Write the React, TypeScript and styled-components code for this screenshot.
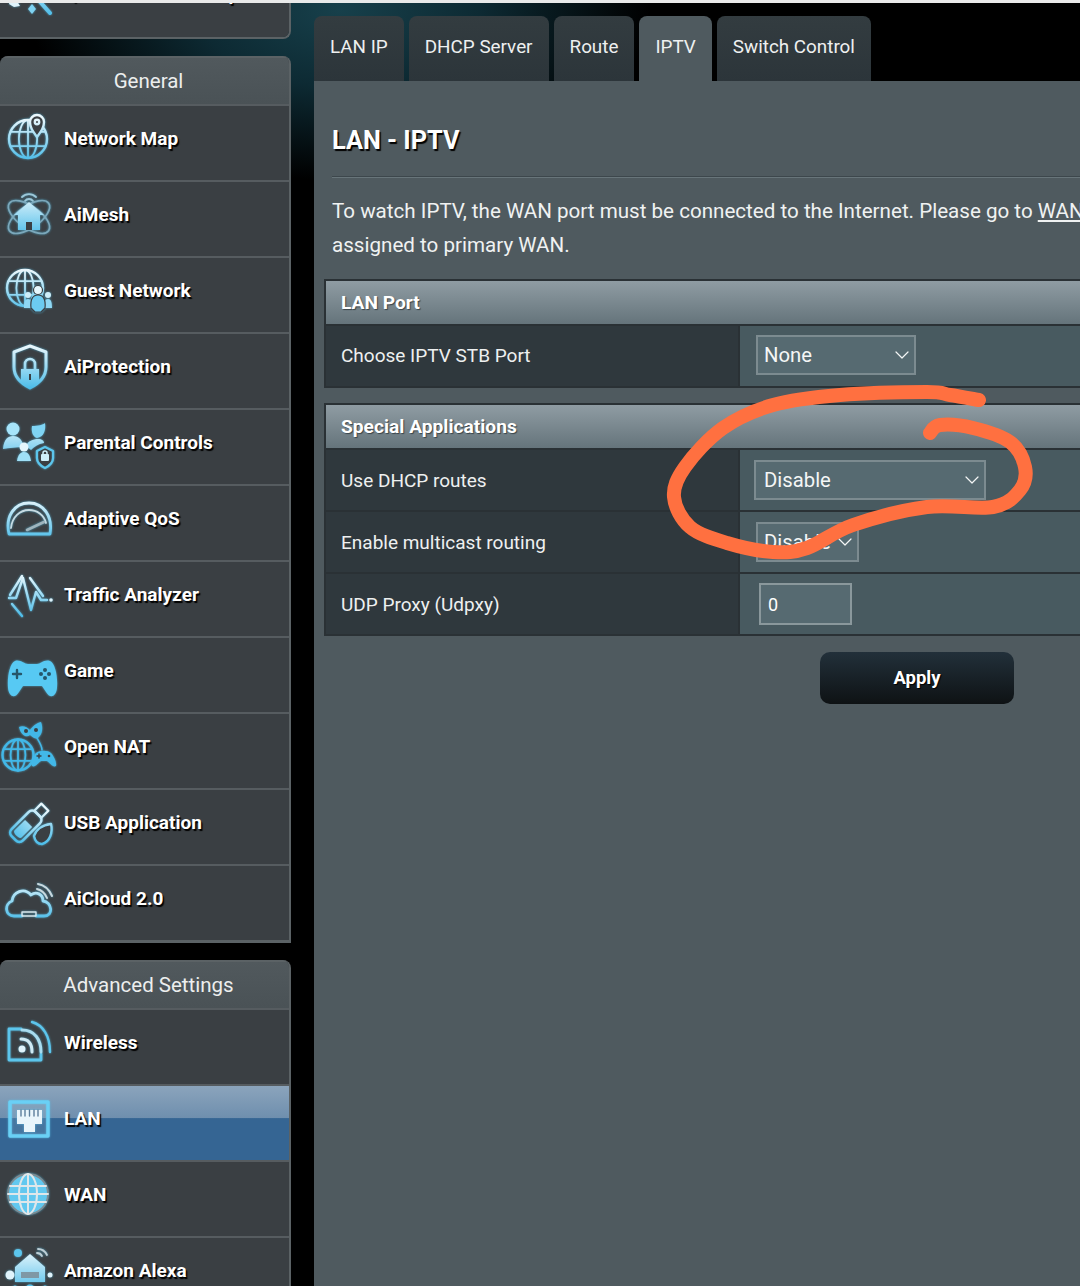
import React from "react";
import styled, { createGlobalStyle } from "styled-components";
import { ChevronDown } from "lucide-react";

const Global = createGlobalStyle`
  html, body { margin: 0; padding: 0; background: #000; }
  body { font-family: Roboto, "Liberation Sans", sans-serif; color: #fff; }
`;

const Page = styled.div`
  position: relative;
  width: 1080px;
  height: 1286px;
  overflow: hidden;
  display: flex;
  flex-direction: column;
  background: radial-gradient(ellipse 310px 170px at 340px 10px, #17404b 0%, #0d2a33 45%, #000 100%), #000;
`;
const TopStrip = styled.div`
  position: relative;
  z-index: 1;
  height: 3px;
  flex: none;
  background: #e9eaea;
`;
const Body = styled.div`
  flex: 1;
  min-height: 0;
  display: flex;
  gap: 23px;
`;
const Sidebar = styled.nav`
  width: 291px;
  flex: none;
  display: flex;
  flex-direction: column;
  gap: 17px;
`;
const MenuPanel = styled.section<{ $clipped?: boolean }>`
  display: flex;
  flex-direction: column;
  justify-content: ${(p) => (p.$clipped ? "flex-end" : "flex-start")};
  flex: none;
  box-sizing: border-box;
  overflow: hidden;
  height: ${(p) => (p.$clipped ? "36px" : "auto")};
  background: #3a3f43;
  border-right: 2px solid #5b6265;
  border-radius: ${(p) => (p.$clipped ? "0 0 8px 0" : "8px 8px 0 0")};
  border-bottom: ${(p) => (p.$clipped ? "2px" : "3px")} solid #5b6265;
`;
const MenuHeading = styled.h2`
  margin: 0;
  height: 48px;
  box-sizing: border-box;
  padding: 8px 0 0 8px;
  text-align: center;
  font-size: 20.5px;
  line-height: 30px;
  font-weight: 400;
  color: #eceeee;
  background: linear-gradient(#51595d, #4a5256);
  border-top: 2px solid #5b6265;
`;
const MenuRow = styled.div<{ $active?: boolean; $raised?: boolean }>`
  height: 76px;
  flex: none;
  box-sizing: border-box;
  display: flex;
  align-items: center;
  gap: 8px;
  padding-bottom: ${(p) => (p.$raised ? "14px" : "10px")};
  border-top: 2px solid #565c60;
  background: ${(p) =>
    p.$active
      ? "linear-gradient(#8ba4bc 0%, #6f8fae 43%, #356593 44%, #356593 100%)"
      : "#3a3f43"};
`;
const MenuLabel = styled.span`
  font-size: 19px;
  font-weight: 700;
  color: #fff;
  white-space: nowrap;
  text-shadow: 1.5px 1.5px 1px #000;
`;
const IconSvg = styled.svg`
  width: 56px;
  height: 56px;
  flex: none;
  overflow: visible;
  fill: none;
  stroke: url(#iconFade);
  stroke-width: 2.4;
  stroke-linecap: round;
  stroke-linejoin: round;
  filter: drop-shadow(0 0 1.2px rgba(90, 200, 240, 0.7));
`;
const HiddenDefs = styled.svg`
  position: absolute;
  width: 0;
  height: 0;
`;

const Main = styled.main`
  flex: 1;
  min-width: 0;
  padding-top: 13px;
  display: flex;
  flex-direction: column;
`;
const TabBar = styled.div`
  display: flex;
  gap: 5px;
  height: 65px;
  flex: none;
`;
const Tab = styled.div<{ $active?: boolean }>`
  padding: 0 16px 4px;
  display: flex;
  align-items: center;
  font-size: 18.85px;
  color: #eef0f0;
  border-radius: 8px 8px 0 0;
  background: ${(p) => (p.$active ? "#4f5a5f" : "linear-gradient(#333c40, #2c353a)")};
`;
const ContentPanel = styled.div`
  flex: 1;
  background: #4f5a5f;
  padding: 45px 0 0 10px;
`;
const Title = styled.h1`
  margin: 0 0 20px 8px;
  font-size: 25.3px;
  line-height: 30px;
  font-weight: 700;
  text-shadow: 1.5px 1.5px 1px #000;
`;
const Divider = styled.div`
  margin-left: 8px;
  height: 2px;
  background: linear-gradient(#3d474c 50%, #68757a 50%);
`;
const Intro = styled.p`
  margin: 16px 0 17px 8px;
  font-size: 20.6px;
  line-height: 34px;
  white-space: nowrap;
  color: #f0f2f2;
`;
const Section = styled.section`
  width: 1184px;
  margin-bottom: 15px;
  border: 2px solid #2a3135;
  border-right: none;
  box-sizing: border-box;
`;
const SectionTitle = styled.h3`
  margin: 0;
  height: 45px;
  box-sizing: border-box;
  padding-left: 15px;
  border-bottom: 2px solid #2a3135;
  font-size: 19.2px;
  line-height: 43px;
  font-weight: 700;
  background: linear-gradient(#8f9ca3, #65747b);
  text-shadow: 1px 1px 1px #39444a;
`;
const FieldRow = styled.div<{ $lift?: boolean }>`
  display: grid;
  grid-template-columns: 414px 1fr;
  height: 62px;
  box-sizing: border-box;
  border-bottom: 2px solid #2a3135;
  &:last-child {
    height: 60px;
    border-bottom: none;
  }
  > * {
    padding-bottom: ${(p) => (p.$lift ? "2px" : "0")};
  }
`;
const FieldLabel = styled.div`
  display: flex;
  align-items: center;
  padding-left: 15px;
  font-size: 19px;
  color: #eef0f0;
  background: #2f383d;
  border-right: 2px solid #2a3135;
`;
const FieldValue = styled.div`
  display: flex;
  align-items: center;
  padding-left: 16px;
  background: #485a60;
`;
const SelectBox = styled.div<{ $width: number; $shift?: number }>`
  width: ${(p) => p.$width}px;
  height: 40px;
  margin-left: ${(p) => -(p.$shift ?? 0)}px;
  box-sizing: border-box;
  display: flex;
  align-items: center;
  justify-content: space-between;
  padding: 0 0 0 ${(p) => 6 + (p.$shift ?? 0)}px;
  font-size: 20.3px;
  color: #f4f6f6;
  background: #566a71;
  border: 2px solid #7c8b90;
  svg {
    flex: none;
  }
`;
const NumberField = styled.div`
  width: 93px;
  height: 42px;
  margin-left: 3px;
  box-sizing: border-box;
  display: flex;
  align-items: center;
  padding-left: 7px;
  font-size: 18px;
  background: #566a71;
  border: 2px solid #8a989c;
`;
const Actions = styled.div`
  width: 1186px;
  display: flex;
  justify-content: center;
`;
const ApplyButton = styled.button`
  width: 194px;
  height: 52px;
  margin-top: 1px;
  border: none;
  border-radius: 10px;
  font-family: inherit;
  font-size: 18.5px;
  font-weight: 700;
  color: #fff;
  text-shadow: 1px 1px 1px #000;
  background: linear-gradient(#22303a, #0e1214);
`;
const Annotation = styled.svg`
  position: absolute;
  left: 0;
  top: 0;
  width: 1080px;
  height: 1286px;
  pointer-events: none;
`;

const GlobeLines = ({ cx, cy, r }: { cx: number; cy: number; r: number }) => (
  <>
    <circle cx={cx} cy={cy} r={r} />
    <ellipse cx={cx} cy={cy} rx={r * 0.48} ry={r} strokeWidth={1.8} />
    <path strokeWidth={1.8} d={`M${cx} ${cy - r}V${cy + r}M${cx - r + 2} ${cy - r * 0.38}H${cx + r - 2}M${cx - r + 2} ${cy + r * 0.38}H${cx + r - 2}`} />
  </>
);

const icons: Record<string, React.ReactNode> = {
  wand: (
    <>
      <path strokeWidth={4} d="M33 29 L50 48" />
      <path fill="#7fd3f2" stroke="none" d="M32 39 l4 5 -4 5 -4 -5z" />
      <path fill="#dff3fb" stroke="none" d="M10 35 l7 1 3 5 -6 1 -5 -3z" />
    </>
  ),
  map: (
    <>
      <GlobeLines cx={28} cy={29} r={19} />
      <path fill="#3a3f43" d="M37 27 C32 20 30 17 30 12 a7 7 0 0 1 14 0 c0 5 -2 8 -7 15z" />
      <circle cx={37} cy={12} r={2.2} />
    </>
  ),
  mesh: (
    <>
      <path strokeWidth={1.8} stroke="#9cc7d8" d="M22 11 a10 10 0 0 1 14 0 M25 15 a5 5 0 0 1 8 0" />
      <ellipse cx={29} cy={31} rx={24} ry={11} transform="rotate(35 29 31)" strokeWidth={1.7} stroke="#7ca8bb" />
      <ellipse cx={29} cy={31} rx={24} ry={11} transform="rotate(-35 29 31)" strokeWidth={1.7} stroke="#7ca8bb" />
      <path stroke="none" fill="url(#iconFade)" d="M29 16 L44 29 L40 29 V44 H18 V29 L14 29 Z" />
      <rect x={26} y={36} width={6} height={8} fill="#3a3f43" stroke="none" />
    </>
  ),
  guest: (
    <>
      <GlobeLines cx={25} cy={26} r={18} />
      <circle cx={28} cy={33} r={3} fill="#cfeef9" stroke="none" />
      <circle cx={48} cy={33} r={3} fill="#cfeef9" stroke="none" />
      <path fill="#8fd8f4" stroke="none" d="M24 46 c0 -6 1 -9 4 -9 s4 3 4 9z M44 46 c0 -6 1 -9 4 -9 s4 3 4 9z" />
      <circle cx={38} cy={28} r={4.5} fill="#e6f7fd" stroke="#3a3f43" strokeWidth={1.2} />
      <path fill="#6ccbf0" stroke="#3a3f43" strokeWidth={1.2} d="M31 46 c-1 -9 2 -13 7 -13 s8 4 7 13 l-4 4 h-6z" />
    </>
  ),
  shield: (
    <>
      <path strokeWidth={3} d="M30 8 L46 14 V29 C46 40 38 46 30 50 C22 46 14 40 14 29 V14 Z" />
      <path fill="url(#iconFade)" stroke="none" d="M21 31 H39 V44 L30 49 L21 44 Z" />
      <path strokeWidth={2.6} d="M25 31 v-5 a5 5 0 0 1 10 0 v5" />
      <rect x={29} y={36} width={2} height={6} fill="#3a3f43" stroke="none" />
    </>
  ),
  parental: (
    <>
      <circle cx={13} cy={15} r={6.5} fill="#a6e4fa" stroke="none" />
      <path stroke="none" fill="url(#iconFade)" d="M3 35 C4 25 8 22 13 22 C19 22 23 26 23 33 C17 33 9 34 3 35Z" />
      <path stroke="none" fill="#7fd4f4" d="M32 12 C38 12 43 11 45 9 C46 16 44 23 37 24 C33 23 31 18 32 12Z" />
      <path stroke="none" fill="url(#iconFade)" d="M26 32 C28 27 33 25 38 25 C42 25 44 27 44 29 C38 30 34 33 31 36Z" />
      <circle cx={24} cy={33} r={4.5} fill="#e4f6fc" stroke="none" />
      <path stroke="none" fill="#9fe0f7" d="M17 47 C18 40 21 38 24 38 C28 38 30 41 31 47Z" />
      <path fill="#3a3f43" stroke="#5cc5ec" strokeWidth={2.4} d="M45 33 L53 37 V44 C53 49 49 52 45 54 C41 52 37 49 37 44 V37Z" />
      <rect x={41} y={40} width={8} height={7} rx={1} fill="#cdeef9" stroke="none" />
      <path strokeWidth={1.5} stroke="#cdeef9" d="M43 40 v-1 a2 2 0 0 1 4 0 v1" />
    </>
  ),
  qos: (
    <>
      <path strokeWidth={2.8} d="M9 44 C5 27 14 13 29 13 C44 13 53 27 50 44 Z" />
      <path strokeWidth={1.8} stroke="#c7dbe3" d="M11 38 C12 27 20 20 29 20 C37 20 44 25 46 33" />
      <path strokeWidth={2.6} stroke="#9fb4bd" d="M27 40 L44 32" />
    </>
  ),
  traffic: (
    <>
      <path strokeWidth={2.4} d="M9 32 H16 L23 12 L31 44 L36 26 L41 34 H47" />
      <path strokeWidth={2.4} d="M10 29 L22 10 M30 12 L43 30 M12 38 L22 50" />
      <circle cx={51} cy={34} r={1.8} fill="#dff3fb" stroke="none" />
    </>
  ),
  game: (
    <>
      <path stroke="none" fill="#57c9f3" d="M15 19 C20 17 24 22 28 22 H37 C41 22 44 17 50 19 C55 21 58 34 57 46 C56 55 50 57 46 50 L42 44 H23 L19 50 C15 57 9 55 8 46 C7 34 10 21 15 19Z" />
      <path stroke="#26566a" strokeWidth={2.4} d="M17 28 V36 M13 32 H21" />
      <circle cx={45} cy={28} r={2} fill="#26566a" stroke="none" />
      <circle cx={45} cy={36} r={2} fill="#26566a" stroke="none" />
      <circle cx={41} cy={32} r={2} fill="#26566a" stroke="none" />
      <circle cx={49} cy={32} r={2} fill="#26566a" stroke="none" />
    </>
  ),
  nat: (
    <>
      <g stroke="#42b8e8">
        <GlobeLines cx={18} cy={37} r={15.5} />
        <path strokeWidth={1.6} d="M37 20 C40 25 42 28 42 32" />
      </g>
      <path stroke="none" fill="#42b8e8" d="M19 9 C23 7 27 9 30 12 C32 9 36 5 41 4 C43 9 43 16 38 20 C34 22 32 18 30 17 C27 20 21 18 19 9Z" />
      <circle cx={26} cy={13} r={2} fill="#3a3f43" stroke="none" />
      <circle cx={36} cy={12} r={2} fill="#3a3f43" stroke="none" />
      <path stroke="none" fill="#42b8e8" d="M36 35 C40 32 48 32 51 35 C54 38 57 45 56 48 C53 50 50 45 47 43 H41 C38 45 35 50 32 48 C31 45 33 38 36 35Z" />
      <path stroke="#3a3f43" strokeWidth={1.4} d="M39 36 V40 M37 38 H41" />
      <circle cx={49} cy={38} r={1.3} fill="#3a3f43" stroke="none" />
    </>
  ),
  usb: (
    <>
      <g transform="rotate(45 30 28)">
        <rect x={22} y={17} width={16} height={34} rx={5} strokeWidth={2.6} />
        <rect x={25} y={7} width={10} height={10} strokeWidth={2.2} />
        <path stroke="none" fill="url(#iconFade)" d="M25 30 H35 V45 C35 48 25 48 25 45Z" />
      </g>
      <path fill="#3a3f43" strokeWidth={2.4} d="M34 42 C36 36 42 31 51 30 C53 38 50 48 42 50 C38 50 35 47 34 42Z" />
    </>
  ),
  cloud: (
    <>
      <path strokeWidth={2.8} d="M14 46 C5 46 4 34 12 31 C13 22 24 17 31 25 C36 21 43 24 43 31 C52 32 54 46 44 46 H36 M22 46 H14" />
      <path strokeWidth={2} stroke="#c9d8de" d="M38 14 C44 15 49 19 52 26 M37 19 C41 20 45 23 47 28" />
      <rect x={22} y={42} width={14} height={4} strokeWidth={1.4} stroke="#d9e6eb" />
    </>
  ),
  wireless: (
    <>
      <path strokeWidth={2.8} stroke="#5cc5ec" d="M21 15 H9 V46 H41 V40" />
      <circle cx={22} cy={35} r={3.5} fill="#dff3fb" stroke="none" />
      <path strokeWidth={3} stroke="#cfe9f3" d="M21 25 C29 25 32 30 32 38" />
      <path strokeWidth={3} stroke="#a9dcef" d="M22 16 C35 16 41 26 41 38" />
      <path strokeWidth={2.4} stroke="#5cc5ec" d="M32 8 C43 11 50 22 50 38" />
    </>
  ),
  lan: (
    <>
      <rect x={10} y={12} width={38} height={34} strokeWidth={3.5} stroke="#6ad0f5" fill="rgba(255,255,255,0.08)" />
      <path stroke="none" fill="#e8f5fb" d="M17 20 H42 V34 H35 V42 H24 V34 H17 Z" />
      <path stroke="#5d7f9c" strokeWidth={1.4} d="M21 20 V26 M25 20 V26 M29.500 20 V26 M34 20 V26 M38 20 V26" />
    </>
  ),
  wan: (
    <>
      <circle cx={28} cy={28} r={20} fill="#62c8ef" stroke="#7d8b92" strokeWidth={1.8} />
      <g stroke="#dfe7ea" strokeWidth={2}>
        <ellipse cx={28} cy={28} rx={9} ry={20} />
        <path d="M28 8 V48 M10 20 H46 M8 28 H48 M10 36 H46" />
      </g>
    </>
  ),
  alexa: (
    <>
      <path stroke="none" fill="url(#iconFade)" d="M30 12 L45 25 V40 H15 V25 Z" />
      <rect x={21} y={30} width={18} height={6} fill="#7f98a5" stroke="none" />
      <path strokeWidth={1.8} stroke="#bfcfd6" d="M38 7 C42 7 45 9 47 13 M37 11 C39 11 41 12 42 14" />
      <circle cx={18} cy={11} r={4} fill="#5cc5ec" stroke="none" />
      <circle cx={10} cy={33} r={4.5} fill="#dff3fb" stroke="none" />
      <circle cx={50} cy={33} r={2.5} fill="#dff3fb" stroke="none" />
      <circle cx={30} cy={47} r={4.5} fill="#5cc5ec" stroke="none" />
      <circle cx={15} cy={46} r={2.5} fill="#5cc5ec" stroke="none" />
      <circle cx={45} cy={46} r={2.5} fill="#5cc5ec" stroke="none" />
    </>
  ),
};

const general = [
  ["map", "Network Map"],
  ["mesh", "AiMesh"],
  ["guest", "Guest Network"],
  ["shield", "AiProtection"],
  ["parental", "Parental Controls"],
  ["qos", "Adaptive QoS"],
  ["traffic", "Traffic Analyzer"],
  ["game", "Game"],
  ["nat", "Open NAT"],
  ["usb", "USB Application"],
  ["cloud", "AiCloud 2.0"],
];
const advanced = [
  ["wireless", "Wireless"],
  ["lan", "LAN"],
  ["wan", "WAN"],
  ["alexa", "Amazon Alexa"],
];
const tabs = ["LAN IP", "DHCP Server", "Route", "IPTV", "Switch Control"];

const stroke: [number, number][] = [
  [979, 400], [950, 395], [927, 392], [840, 395], [773, 405], [723, 428], [685, 467], [674, 497],
  [690, 527], [727, 543], [773, 552], [807, 548], [853, 525], [927, 507], [993, 507],
  [1020, 490], [1025, 467], [1010, 442], [973, 428], [940, 425], [930, 433],
];
const smoothPath = (pts: [number, number][]) => {
  let d = `M${pts[0][0]} ${pts[0][1]}`;
  for (let i = 0; i < pts.length - 1; i++) {
    const a = pts[Math.max(i - 1, 0)];
    const b = pts[i];
    const c = pts[i + 1];
    const e = pts[Math.min(i + 2, pts.length - 1)];
    d += `C${b[0] + (c[0] - a[0]) / 6} ${b[1] + (c[1] - a[1]) / 6} ${c[0] - (e[0] - b[0]) / 6} ${c[1] - (e[1] - b[1]) / 6} ${c[0]} ${c[1]}`;
  }
  return d;
};

const Row = ({ icon, label, active, raised }: { icon: string; label: string; active?: boolean; raised?: boolean }) => (
  <MenuRow $active={active} $raised={raised}>
    <IconSvg viewBox="0 0 56 56">{icons[icon]}</IconSvg>
    <MenuLabel>{label}</MenuLabel>
  </MenuRow>
);

const Chevron = () => <ChevronDown size={24} strokeWidth={1.2} />;

export default function App() {
  return (
    <Page>
      <Global />
      <HiddenDefs>
        <defs>
          <linearGradient id="iconFade" gradientUnits="userSpaceOnUse" x1="0" y1="8" x2="0" y2="50">
            <stop offset="0" stopColor="#eaf7fc" />
            <stop offset="1" stopColor="#4dbde9" />
          </linearGradient>
        </defs>
      </HiddenDefs>
      <TopStrip />
      <Body>
        <Sidebar>
          <MenuPanel $clipped>
            <Row icon="wand" label="Quick Internet Setup" raised />
          </MenuPanel>
          <MenuPanel>
            <MenuHeading>General</MenuHeading>
            {general.map(([icon, label]) => (
              <Row key={label} icon={icon} label={label} />
            ))}
          </MenuPanel>
          <MenuPanel>
            <MenuHeading>Advanced Settings</MenuHeading>
            {advanced.map(([icon, label]) => (
              <Row key={label} icon={icon} label={label} active={label === "LAN"} />
            ))}
          </MenuPanel>
        </Sidebar>
        <Main>
          <TabBar>
            {tabs.map((t) => (
              <Tab key={t} $active={t === "IPTV"}>{t}</Tab>
            ))}
          </TabBar>
          <ContentPanel>
            <Title>LAN - IPTV</Title>
            <Divider />
            <Intro>
              To watch IPTV, the WAN port must be connected to the Internet. Please go to <u>WAN</u>
              <br />
              assigned to primary WAN.
            </Intro>
            <Section>
              <SectionTitle>LAN Port</SectionTitle>
              <FieldRow $lift>
                <FieldLabel>Choose IPTV STB Port</FieldLabel>
                <FieldValue>
                  <SelectBox $width={160}>None<Chevron /></SelectBox>
                </FieldValue>
              </FieldRow>
            </Section>
            <Section>
              <SectionTitle>Special Applications</SectionTitle>
              <FieldRow>
                <FieldLabel>Use DHCP routes</FieldLabel>
                <FieldValue>
                  <SelectBox $width={232} $shift={2}>Disable<Chevron /></SelectBox>
                </FieldValue>
              </FieldRow>
              <FieldRow>
                <FieldLabel>Enable multicast routing</FieldLabel>
                <FieldValue>
                  <SelectBox $width={103}>Disable<Chevron /></SelectBox>
                </FieldValue>
              </FieldRow>
              <FieldRow>
                <FieldLabel>UDP Proxy (Udpxy)</FieldLabel>
                <FieldValue>
                  <NumberField>0</NumberField>
                </FieldValue>
              </FieldRow>
            </Section>
            <Actions>
              <ApplyButton>Apply</ApplyButton>
            </Actions>
          </ContentPanel>
        </Main>
      </Body>
      <Annotation viewBox="0 0 1080 1286">
        <path d={smoothPath(stroke)} fill="none" stroke="#ff7040" strokeWidth={14} strokeLinecap="round" strokeLinejoin="round" />
      </Annotation>
    </Page>
  );
}
